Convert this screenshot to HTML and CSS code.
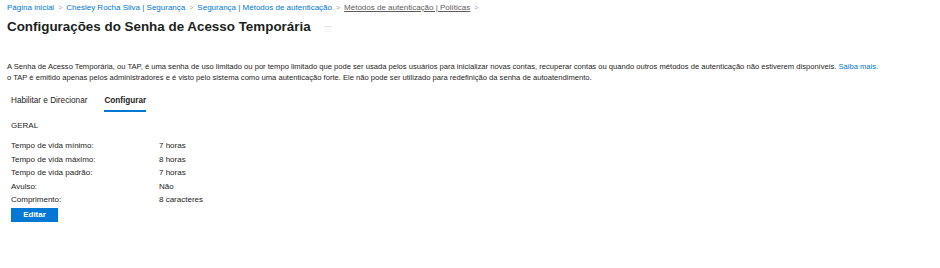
FILE: index.html
```html
<!DOCTYPE html>
<html lang="pt-BR">
<head>
  <meta charset="UTF-8" />
  <title>Configurações do Senha de Acesso Temporária</title>
  <link rel="stylesheet" href="styles.css">
</head>
<body>
  <nav class="breadcrumb">
    <a href="#">Página inicial</a>
    <span class="sep">&gt;</span>
    <a href="#">Chesley Rocha Silva | Segurança</a>
    <span class="sep">&gt;</span>
    <a href="#">Segurança | Métodos de autenticação</a>
    <span class="sep">&gt;</span>
    <a href="#" class="current">Métodos de autenticação | Políticas</a>
    <span class="sep">&gt;</span>
  </nav>

  <div class="page-header">
    <h1>Configurações do Senha de Acesso Temporária</h1>
    <span class="more">...</span>
  </div>

  <p class="intro">
    A Senha de Acesso Temporária, ou TAP, é uma senha de uso limitado ou por tempo limitado que pode ser usada pelos usuários para inicializar novas contas, recuperar contas ou quando outros métodos de autenticação não estiverem disponíveis. <a href="#">Saiba mais.</a><br>
    o TAP é emitido apenas pelos administradores e é visto pelo sistema como uma autenticação forte. Ele não pode ser utilizado para redefinição da senha de autoatendimento.
  </p>

  <div class="tabs">
    <button class="tab">Habilitar e Direcionar</button>
    <button class="tab active">Configurar</button>
  </div>

  <section class="settings">
    <h2>GERAL</h2>
    <dl class="props">
      <dt>Tempo de vida mínimo:</dt><dd>7 horas</dd>
      <dt>Tempo de vida máximo:</dt><dd>8 horas</dd>
      <dt>Tempo de vida padrão:</dt><dd>7 horas</dd>
      <dt>Avulso:</dt><dd>Não</dd>
      <dt>Comprimento:</dt><dd>8 caracteres</dd>
    </dl>
    <button class="btn-primary">Editar</button>
  </section>
</body>
</html>
```

FILE: styles.css
```css
:root {
  --primary: #0078d4;
  --text: #252423;
  --text-secondary: #605e5c;
}

* {
  margin: 0;
  padding: 0;
  box-sizing: border-box;
}

body {
  font-family: 'Liberation Sans', Arial, sans-serif;
  color: var(--text);
  background: #ffffff;
  padding: 0 7px;
}

a {
  color: var(--primary);
  text-decoration: none;
}

.breadcrumb {
  display: flex;
  align-items: center;
  gap: 4px;
  height: 13px;
  margin-top: 1px;
  font-size: 8px;
}

.breadcrumb .sep {
  color: #a19f9d;
  font-size: 7px;
}

.breadcrumb .current {
  color: var(--text-secondary);
  text-decoration: underline;
}

.page-header {
  display: flex;
  align-items: center;
  gap: 14px;
  height: 22px;
  margin-top: 1px;
}

.page-header h1 {
  font-size: 13.4px;
  font-weight: 600;
  color: #201f1e;
}

.more {
  color: #8a8886;
  font-size: 7px;
  letter-spacing: 0.5px;
  margin-top: -3px;
}

.intro {
  margin-top: 25px;
  font-size: 7.6px;
  line-height: 10.5px;
}

.tabs {
  display: flex;
  gap: 17px;
  margin-top: 9px;
  padding-left: 4px;
}

.tab {
  background: none;
  border: none;
  font-family: inherit;
  font-size: 8.2px;
  color: var(--text);
  padding: 4px 0 5px;
  border-bottom: 2px solid transparent;
}

.tab.active {
  font-weight: 700;
  border-bottom-color: var(--primary);
}

.settings {
  padding-left: 4px;
}

.settings h2 {
  font-size: 8px;
  font-weight: 400;
  margin-top: 9px;
  margin-bottom: 9px;
}

.props {
  display: grid;
  grid-template-columns: 148px auto;
  font-size: 8px;
  line-height: 13.5px;
}

.btn-primary {
  display: block;
  width: 47px;
  height: 14px;
  margin-top: 1px;
  border: none;
  background: var(--primary);
  color: #ffffff;
  font-family: inherit;
  font-size: 8px;
  font-weight: 600;
}
```
